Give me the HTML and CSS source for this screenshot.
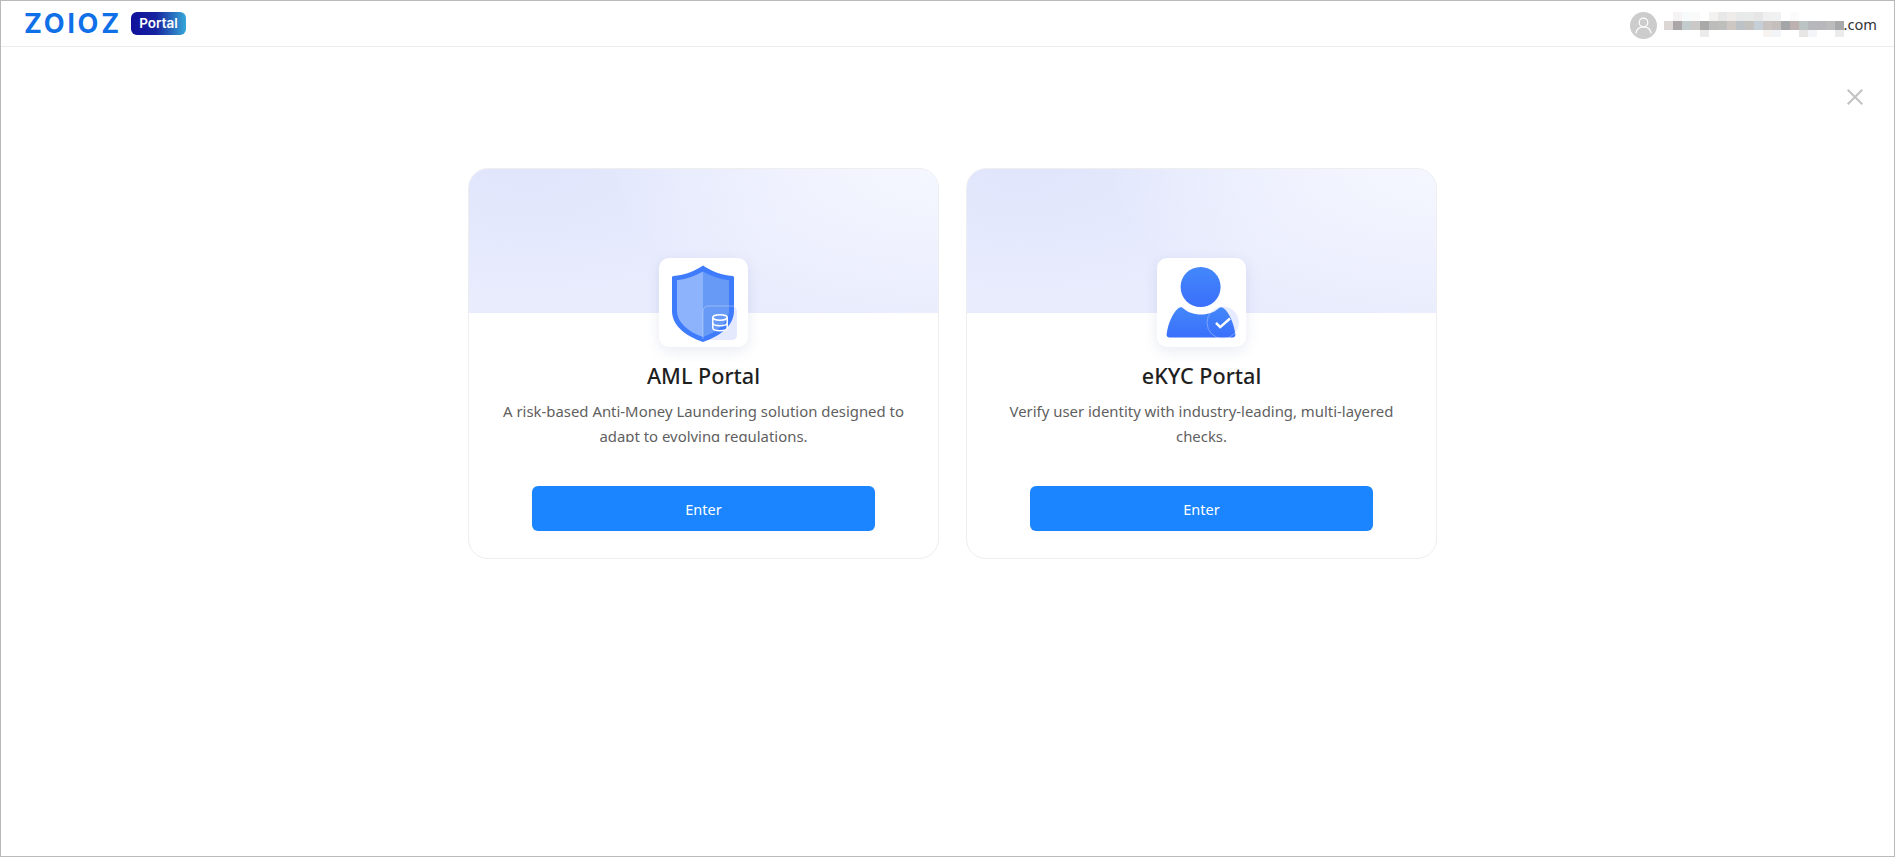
FILE: index.html
```html
<!DOCTYPE html>
<html lang="en">
<head>
  <meta charset="UTF-8" />
  <title>ZOLOZ Portal</title>
  <link rel="stylesheet" href="styles.css">
</head>
<body>

<header class="topbar">
  <div class="brand">
    <span class="logo">ZOlOZ</span>
    <span class="badge">Portal</span>
  </div>
  <div class="account">
    <svg class="avatar" width="27" height="27" viewBox="0 0 27 27">
      <circle cx="13.5" cy="13.5" r="13.5" fill="#cccccc"/>
      <circle cx="13.5" cy="10.5" r="4.3" fill="none" stroke="#fff" stroke-width="1.2"/>
      <path d="M6 21c.6-4 3.4-6.2 7.5-6.2s6.900 2.200 7.500 6.200" fill="none" stroke="#fff" stroke-width="1.200" stroke-linecap="round"/>
    </svg>
    <svg class="mosaic" width="180" height="25" viewBox="0 0 180 25">
      <g>
        <rect x="9" y="0" width="9" height="9" fill="#f5f3f3"/>
        <rect x="18" y="0" width="9" height="9" fill="#f8fbfb"/>
        <rect x="27" y="0" width="9" height="9" fill="#fafafa"/>
        <rect x="45" y="0" width="9" height="9" fill="#f3f2f1"/>
        <rect x="54" y="0" width="9" height="9" fill="#e8e8e8"/>
        <rect x="63" y="0" width="9" height="9" fill="#efedeb"/>
        <rect x="72" y="0" width="9" height="9" fill="#e8eaea"/>
        <rect x="81" y="0" width="9" height="9" fill="#e9ebea"/>
        <rect x="90" y="0" width="9" height="9" fill="#e6e6e6"/>
        <rect x="99" y="0" width="9" height="9" fill="#f0f0f0"/>
        <rect x="108" y="0" width="9" height="9" fill="#eff1f3"/>
        <rect x="126" y="0" width="9" height="9" fill="#fbfbfb"/>
      </g>
      <g>
        <rect x="0" y="9" width="9" height="9" fill="#dcd6d4"/>
        <rect x="9" y="9" width="9" height="9" fill="#aba6a7"/>
        <rect x="18" y="9" width="9" height="9" fill="#c4cbcd"/>
        <rect x="27" y="9" width="9" height="9" fill="#cac9c8"/>
        <rect x="36" y="9" width="9" height="9" fill="#a9a9a9"/>
        <rect x="45" y="9" width="9" height="9" fill="#bcbcba"/>
        <rect x="54" y="9" width="9" height="9" fill="#bcbfbb"/>
        <rect x="63" y="9" width="9" height="9" fill="#cfc7c1"/>
        <rect x="72" y="9" width="9" height="9" fill="#bcc2c5"/>
        <rect x="81" y="9" width="9" height="9" fill="#c4c2bf"/>
        <rect x="90" y="9" width="9" height="9" fill="#c6ced7"/>
        <rect x="99" y="9" width="9" height="9" fill="#c8c3c0"/>
        <rect x="108" y="9" width="9" height="9" fill="#c4bebd"/>
        <rect x="117" y="9" width="9" height="9" fill="#a3a5a9"/>
        <rect x="126" y="9" width="9" height="9" fill="#bcb0b0"/>
        <rect x="135" y="9" width="9" height="9" fill="#bcc4c3"/>
        <rect x="144" y="9" width="9" height="9" fill="#b7b8bb"/>
        <rect x="153" y="9" width="9" height="9" fill="#b8b8bc"/>
        <rect x="162" y="9" width="9" height="9" fill="#bcbcbc"/>
        <rect x="171" y="9" width="9" height="9" fill="#a8a9ab"/>
      </g>
      <g>
        <rect x="36" y="18" width="9" height="7" fill="#ebebeb"/>
        <rect x="99" y="18" width="9" height="7" fill="#f6f3f0"/>
        <rect x="108" y="18" width="9" height="7" fill="#f2f4f7"/>
        <rect x="135" y="18" width="9" height="7" fill="#e8e6e5"/>
        <rect x="144" y="18" width="9" height="7" fill="#f3f5f9"/>
        <rect x="171" y="18" width="9" height="7" fill="#ebebeb"/>
      </g>
    </svg>
    <span class="email">.com</span>
  </div>
</header>

<svg class="close" width="16" height="16" viewBox="0 0 16 16">
  <path d="M.7.7l14.600 14.600M15.300.7L.7 15.300" stroke="#c2c2c2" stroke-width="2" fill="none"/>
</svg>

<main class="portals">

  <section class="card">
    <div class="card-top"></div>
    <div class="tile">
      <svg width="88" height="88" viewBox="0 0 88 88">
        <path d="M44 53c0-2.800 2.200-5 5-5h24c2.800 0 5 2.200 5 5v24c0 2.800-2.200 5-5 5H49c-2 0-3.500-.6-5-1.500z" fill="#e4e9fe"/>
        <path d="M44 7.500c-8 5.500-18 9.500-29.500 10.500-1 .1-1.500.7-1.500 1.600V53c0 14 13 25 31 31 18-6 31-17 31-31V19.600c0-.9-.5-1.500-1.500-1.600C62 17 52 13 44 7.500z" fill="#3f7bfd"/>
        <path d="M44 13.500c-7.500 4.500-16 7.500-26 8.800V53c0 11 10.500 20.500 26 26z" fill="#8db3fd"/>
        <path d="M44 13.500c7.500 4.500 16 7.500 26 8.800V53c0 11-10.500 20.500-26 26z" fill="#6799f6"/>
        <path d="M44 81V53c0-2.800 2.200-5 5-5h24c2.800 0 5 2.200 5 5v4" fill="none" stroke="#fff" stroke-opacity=".4" stroke-width=".8"/>
        <g fill="none" stroke="#fff" stroke-width="1.500">
          <ellipse cx="61" cy="59.500" rx="7.200" ry="2.700"/>
          <path d="M53.800 59.500v10.500c0 1.500 3.200 2.700 7.200 2.700s7.200-1.200 7.200-2.700V59.500"/>
          <path d="M53.800 65c0 1.500 3.200 2.700 7.200 2.700s7.200-1.200 7.200-2.700"/>
        </g>
      </svg>
    </div>
    <h2 class="card-title">AML Portal</h2>
    <p class="card-desc">A risk-based Anti-Money Laundering solution designed to adapt to evolving regulations.</p>
    <button class="enter-btn">Enter</button>
  </section>

  <section class="card">
    <div class="card-top"></div>
    <div class="tile">
      <svg width="88" height="88" viewBox="0 0 88 88">
        <defs>
          <linearGradient id="personFill" x1="0" y1="0" x2="0" y2="1">
            <stop offset="0" stop-color="#4388fb"/>
            <stop offset="1" stop-color="#3a6ffb"/>
          </linearGradient>
        </defs>
        <circle cx="66" cy="64.500" r="16" fill="#e6ebff"/>
        <path d="M12.500 79.500c-2 0-3.200-1.300-2.900-3.200C11 66 15.500 55 21 50.500c1.500-1.200 3.200-1.800 4.500-.8 5 4.500 11 6.800 18.500 6.800s13.500-2.300 18.500-6.800c1.300-1 3-.4 4.500.8 5.500 4.500 10 15.500 11.400 25.800.3 1.900-.9 3.200-2.900 3.200z" fill="url(#personFill)"/>
        <circle cx="43.600" cy="29" r="20" fill="url(#personFill)"/>
        <circle cx="66" cy="64.500" r="16" fill="none" stroke="#fff" stroke-opacity=".45" stroke-width=".7"/>
        <path d="M59 64.800l4.200 4.300 9.800-8.600" fill="none" stroke="#fff" stroke-width="2.500"/>
      </svg>
    </div>
    <h2 class="card-title">eKYC Portal</h2>
    <p class="card-desc">Verify user identity with industry-leading, multi-layered checks.</p>
    <button class="enter-btn">Enter</button>
  </section>

</main>

</body>
</html>
```

FILE: styles.css
```css
* {
  box-sizing: border-box;
}

html, body {
  margin: 0;
  padding: 0;
  height: 100%;
}

body {
  position: relative;
  height: 857px;
  overflow: hidden;
  font-family: 'Noto Sans', 'Open Sans', sans-serif;
  background-color: #fff;
  color: #1f1f1f;
  border: 1px solid #b9b9b9;
}

.topbar {
  display: flex;
  align-items: center;
  justify-content: space-between;
  height: 46px;
  padding: 0 17px 0 23px;
  border-bottom: 1px solid #ececec;
}

.brand {
  display: flex;
  align-items: center;
  gap: 10px;
}

.logo {
  width: 97px;
  font-family: 'Inter', sans-serif;
  font-size: 27px;
  font-weight: 700;
  line-height: 30px;
  letter-spacing: 2.8px;
  color: #0f70e8;
  white-space: nowrap;
}

.badge {
  height: 23px;
  width: 55px;
  border-radius: 6px;
  background: linear-gradient(90deg, #10109c 0%, #16239f 45%, #35a8d8 100%);
  color: #fff;
  font-family: 'Inter', sans-serif;
  font-size: 13.5px;
  font-weight: 600;
  line-height: 23px;
  text-align: center;
}

.account {
  display: flex;
  align-items: flex-start;
  align-self: flex-start;
  margin-top: 11px;
}

.avatar {
  margin-right: 7px;
}

.mosaic {
  display: block;
}

.email {
  font-size: 14.6px;
  line-height: 25px;
  color: #333;
}

.close {
  position: absolute;
  top: 88px;
  right: 31px;
}

.portals {
  display: flex;
  justify-content: center;
  gap: 27px;
  padding: 121px 0 0 10px;
}

.card {
  display: flex;
  flex-direction: column;
  align-items: center;
  width: 471px;
  height: 391px;
  border: 1px solid #eeeeee;
  border-radius: 20px;
  overflow: hidden;
  background-color: #fff;
}

.card-top {
  align-self: stretch;
  flex: none;
  height: 144px;
  background:
    radial-gradient(ellipse 70% 110% at 100% 0%, #f5f7ff 0%, rgba(245, 247, 255, 0) 100%),
    radial-gradient(ellipse 60% 90% at 12% 0%, #e0e5fc 0%, rgba(224, 229, 252, 0) 100%),
    #e9ecfd;
}

.tile {
  flex: none;
  width: 89px;
  height: 89px;
  margin-top: -55px;
  border-radius: 10px;
  background-color: #fff;
  box-shadow: 0 4px 14px rgba(70, 90, 160, 0.12);
}

.tile svg {
  display: block;
}

.card-title {
  margin: 15px 0 0;
  font-size: 21.6px;
  font-weight: 500;
  line-height: 28px;
  color: #1f1f1f;
}

.card-desc {
  width: 410px;
  height: 43px;
  margin: 9px 0 0;
  overflow: hidden;
  font-size: 14.9px;
  line-height: 25px;
  text-align: center;
  color: #5f5f5f;
}

.enter-btn {
  flex: none;
  width: 343px;
  height: 45px;
  margin-top: 44px;
  border: none;
  border-radius: 6px;
  background-color: #1a85ff;
  box-shadow: 0 4px 12px rgba(0, 0, 0, 0.02);
  color: #fff;
  font-family: inherit;
  font-size: 14.5px;
  cursor: pointer;
}
```
